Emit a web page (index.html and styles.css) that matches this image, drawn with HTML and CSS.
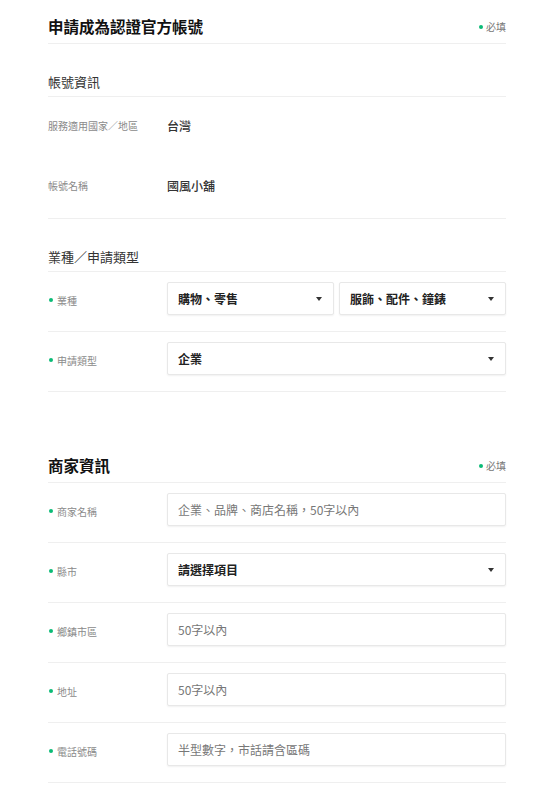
FILE: index.html
```html
<!DOCTYPE html>
<html lang="zh-Hant">
<head>
<meta charset="utf-8">
<title>申請成為認證官方帳號</title>
<link rel="stylesheet" href="styles.css">
</head>
<body>
<main class="page">
  <header class="page-head">
    <h1 class="page-title">申請成為認證官方帳號</h1>
    <span class="req-note"><i class="dot"></i>必填</span>
  </header>

  <h2 class="sub-head">帳號資訊</h2>
  <div class="info-list">
    <div class="info-row">
      <span class="label">服務適用國家／地區</span>
      <span class="value">台灣</span>
    </div>
    <div class="info-row">
      <span class="label">帳號名稱</span>
      <span class="value">國風小舖</span>
    </div>
  </div>

  <h2 class="sub-head">業種／申請類型</h2>
  <div class="form-row">
    <span class="label req"><i class="dot"></i>業種</span>
    <div class="controls split">
      <div class="select"><span>購物、零售</span><i class="caret"></i></div>
      <div class="select"><span>服飾、配件、鐘錶</span><i class="caret"></i></div>
    </div>
  </div>
  <div class="form-row">
    <span class="label req"><i class="dot"></i>申請類型</span>
    <div class="controls">
      <div class="select"><span>企業</span><i class="caret"></i></div>
    </div>
  </div>

  <header class="page-head second">
    <h1 class="page-title">商家資訊</h1>
    <span class="req-note"><i class="dot"></i>必填</span>
  </header>
  <div class="form-row">
    <span class="label req"><i class="dot"></i>商家名稱</span>
    <div class="controls">
      <div class="input">企業、品牌、商店名稱，50字以內</div>
    </div>
  </div>
  <div class="form-row">
    <span class="label req"><i class="dot"></i>縣市</span>
    <div class="controls">
      <div class="select"><span>請選擇項目</span><i class="caret"></i></div>
    </div>
  </div>
  <div class="form-row">
    <span class="label req"><i class="dot"></i>鄉鎮市區</span>
    <div class="controls">
      <div class="input">50字以內</div>
    </div>
  </div>
  <div class="form-row">
    <span class="label req"><i class="dot"></i>地址</span>
    <div class="controls">
      <div class="input">50字以內</div>
    </div>
  </div>
  <div class="form-row">
    <span class="label req"><i class="dot"></i>電話號碼</span>
    <div class="controls">
      <div class="input">半型數字，市話請含區碼</div>
    </div>
  </div>
</main>
</body>
</html>
```

FILE: styles.css
```css
* { box-sizing: border-box; }
html, body { margin: 0; padding: 0; background: #fff; }
body {
  font-family: "Noto Sans CJK TC", "Noto Sans", sans-serif;
  color: #222;
}
.page { padding: 0 48px; }

.page-head {
  display: flex;
  align-items: center;
  justify-content: space-between;
  padding: 16px 0 6px;
  border-bottom: 1px solid #efefef;
}
.page-head.second { margin-top: 47px; }
.page-title {
  margin: 0;
  font-size: 15.5px;
  line-height: 21px;
  font-weight: 700;
  color: #111;
}
.req-note {
  display: flex;
  align-items: center;
  font-size: 10px;
  line-height: 14px;
  color: #777;
}
.dot {
  display: inline-block;
  width: 4px;
  height: 4px;
  border-radius: 50%;
  background: #0bbb76;
  margin-right: 3px;
}

.sub-head {
  margin: 0;
  padding: 28px 0 4px;
  font-size: 13px;
  line-height: 20px;
  font-weight: 400;
  color: #333;
  border-bottom: 1px solid #efefef;
}

.info-list {
  border-bottom: 1px solid #efefef;
  padding-bottom: 1px;
}
.info-row {
  display: flex;
  align-items: center;
  height: 60px;
  padding-bottom: 4px;
}
.label {
  display: flex;
  align-items: center;
  width: 119px;
  flex: none;
  font-size: 10px;
  color: #8a8a8a;
}
.label.req .dot { margin-left: 1px; margin-right: 4px; }
.value {
  font-size: 12px;
  font-weight: 500;
  color: #333;
}

.form-row {
  display: flex;
  align-items: center;
  padding: 10px 0 16px;
  border-bottom: 1px solid #efefef;
}
.form-row .label { padding-top: 3px; }
.controls {
  flex: 1;
  display: flex;
  gap: 5px;
}
.select, .input {
  flex: 1;
  height: 33px;
  display: flex;
  align-items: center;
  padding: 0 10px;
  border: 1px solid #e8e8e8;
  border-radius: 2px;
  box-shadow: 0 1px 2px rgba(0,0,0,0.06);
  font-size: 12px;
  background: #fff;
}
.select {
  justify-content: space-between;
  font-weight: 700;
  color: #222;
}
.input {
  color: #777;
  font-weight: 400;
}
.caret {
  width: 0;
  height: 0;
  border-left: 3.5px solid transparent;
  border-right: 3.5px solid transparent;
  border-top: 4px solid #333;
  margin-right: 1px;
}
```
